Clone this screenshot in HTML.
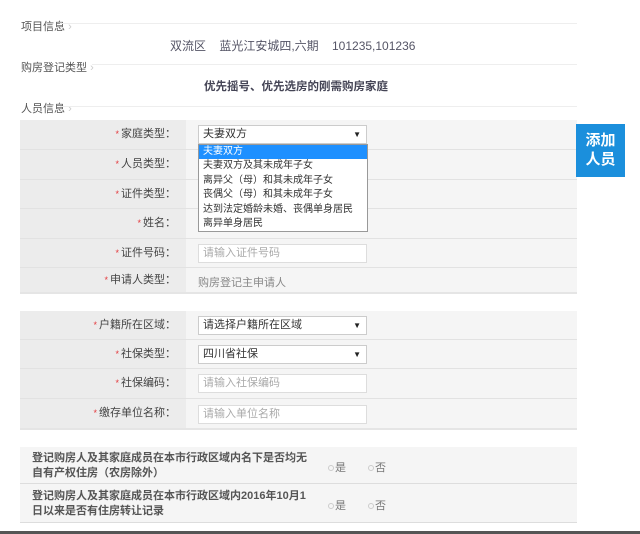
<!DOCTYPE html>
<html><head><meta charset="utf-8"><style>
*{margin:0;padding:0;box-sizing:border-box}
body{width:640px;height:534px;background:#fff;position:relative;overflow:hidden;font-family:"Liberation Sans","Noto Sans CJK SC",sans-serif;font-size:11px;color:#555}
.a{position:absolute;white-space:nowrap}
.sec{font-size:11px;color:#555}
.ln{position:absolute;height:1px;background:#eee;left:60px;right:63px}
.row{position:absolute;left:20px;width:557px;background:#f5f5f5;border-bottom:1px solid #e2e2e2}
.row .lb{position:absolute;left:0;top:0;bottom:0;width:166px;background:#ececec;text-align:right;padding-right:10px;color:#444;font-size:11px}
.row .lb i{color:#e4393c;font-style:normal;font-size:9px;margin-right:2px}
.box{position:absolute;left:178px;width:169px;height:19px;background:#fff;border:1px solid #ddd;font-size:11px;padding-left:4px;line-height:17px;color:#aaa;white-space:nowrap}
.sel{color:#333;border-color:#ccc}
.sel:after{content:"▼";position:absolute;right:5px;top:0;font-size:8px;color:#222}
.dd{position:absolute;left:198px;top:144px;width:170px;height:88px;background:#fff;border:1px solid #999;font-size:10px;color:#333;line-height:14.4px;white-space:nowrap;overflow:hidden}
.dd div{padding-left:4px}
.q{position:absolute;left:12px;font-size:11px;color:#555;line-height:15px;font-weight:bold;white-space:nowrap}
.r{position:absolute;font-size:11px;color:#777}
.r b{display:inline-block;width:6px;height:6px;border-radius:50%;border:1px solid #ccc;margin-right:1px;vertical-align:middle}
</style></head><body>
<div class="a sec" style="left:21px;top:18px">项目信息 <span style="color:#ccc">›</span></div><div class="ln" style="top:23px"></div>
<div class="a" style="left:170px;top:37px;font-size:12px;color:#556">双流区&nbsp;&nbsp;&nbsp; 蓝光江安城四,六期&nbsp;&nbsp;&nbsp; 101235,101236</div>
<div class="a sec" style="left:21px;top:59px">购房登记类型 <span style="color:#ccc">›</span></div><div class="ln" style="top:64px;left:92px"></div>
<div class="a" style="left:204px;top:78px;font-size:11.5px;color:#445;font-weight:bold">优先摇号、优先选房的刚需购房家庭</div>
<div class="a sec" style="left:21px;top:100px">人员信息 <span style="color:#ccc">›</span></div><div class="ln" style="top:106px"></div>

<div class="row" style="top:120px;height:30px"><div class="lb" style="line-height:29px"><i>*</i>家庭类型：</div><div class="box sel" style="top:5px">夫妻双方</div></div>
<div class="row" style="top:150px;height:30px"><div class="lb" style="line-height:29px"><i>*</i>人员类型：</div></div>
<div class="row" style="top:180px;height:29px"><div class="lb" style="line-height:28px"><i>*</i>证件类型：</div></div>
<div class="row" style="top:209px;height:30px"><div class="lb" style="line-height:29px"><i>*</i>姓名：</div></div>
<div class="row" style="top:239px;height:29px"><div class="lb" style="line-height:28px"><i>*</i>证件号码：</div><div class="box" style="top:5px">请输入证件号码</div></div>
<div class="row" style="top:268px;height:26px;border-bottom:2px solid #e5e5e5"><div class="lb" style="line-height:25px"><i>*</i>申请人类型：</div><div class="a" style="left:178px;top:6px;color:#888">购房登记主申请人</div></div>

<div class="dd"><div style="background:#1e90ff;color:#fff">夫妻双方</div><div>夫妻双方及其未成年子女</div><div>离异父（母）和其未成年子女</div><div>丧偶父（母）和其未成年子女</div><div>达到法定婚龄未婚、丧偶单身居民</div><div>离异单身居民</div></div>

<div class="a" style="left:576px;top:124px;width:49px;height:53px;background:#1b8fdc;color:#fff;font-weight:bold;font-size:15px;line-height:19px;text-align:center;padding-top:7px;white-space:normal">添加<br>人员</div>

<div class="row" style="top:311px;height:29px"><div class="lb" style="line-height:28px"><i>*</i>户籍所在区域：</div><div class="box sel" style="top:5px">请选择户籍所在区域</div></div>
<div class="row" style="top:340px;height:29px"><div class="lb" style="line-height:28px"><i>*</i>社保类型：</div><div class="box sel" style="top:5px">四川省社保</div></div>
<div class="row" style="top:369px;height:30px"><div class="lb" style="line-height:29px"><i>*</i>社保编码：</div><div class="box" style="top:5px">请输入社保编码</div></div>
<div class="row" style="top:399px;height:31px;border-bottom:2px solid #e5e5e5"><div class="lb" style="line-height:29px"><i>*</i>缴存单位名称：</div><div class="box" style="top:6px">请输入单位名称</div></div>

<div class="row" style="top:447px;height:37px;border-bottom:1px solid #ddd"><div class="q" style="top:4px">登记购房人及其家庭成员在本市行政区域内名下是否均无<br>自有产权住房（农房除外）</div><div class="r" style="left:308px;top:12px"><b></b>是</div><div class="r" style="left:348px;top:12px"><b></b>否</div></div>
<div class="row" style="top:484px;height:39px;border-bottom:1px solid #ddd"><div class="q" style="top:5px">登记购房人及其家庭成员在本市行政区域内2016年10月1<br>日以来是否有住房转让记录</div><div class="r" style="left:308px;top:13px"><b></b>是</div><div class="r" style="left:348px;top:13px"><b></b>否</div></div>

<div class="a" style="left:0;top:531px;width:640px;height:3px;background:#555"></div>
</body></html>
